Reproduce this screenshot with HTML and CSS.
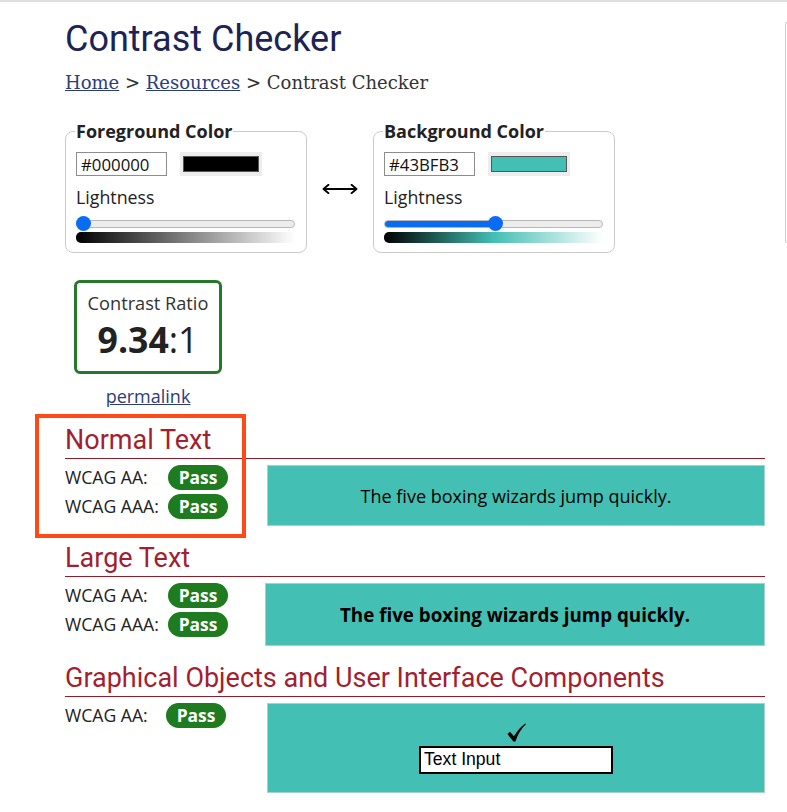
FILE: index.html
```html
<!DOCTYPE html>
<html lang="en">
<head>
<meta charset="utf-8">
<title>Contrast Checker</title>
<link rel="stylesheet" href="styles.css">
</head>
<body>
<div class="topline"></div>
<div class="page">
  <main class="main">
    <h1 class="title">Contrast Checker</h1>
    <nav class="crumbs"><a href="#">Home</a> &gt; <a href="#">Resources</a> &gt; Contrast Checker</nav>

    <div class="pickers">
      <fieldset class="picker">
        <legend>Foreground Color</legend>
        <div class="color-row">
          <input class="hex" type="text" value="#000000">
          <span class="swatch"><span class="swatch-fill" style="background:#000000"></span></span>
        </div>
        <div class="picker-label">Lightness</div>
        <div class="slider">
          <div class="track"><div class="fill" style="width:0%"></div></div>
          <div class="thumb" style="left:0px"></div>
        </div>
        <div class="gradient gradient--fg"></div>
      </fieldset>

      <svg class="swap" width="36" height="10" viewBox="0 0 36 10" aria-hidden="true">
        <path d="M1.5 5H34.5M6.5 0.8L1.5 5L6.5 9.2M29.5 0.8L34.5 5L29.5 9.2" fill="none" stroke="#000" stroke-width="1.8" stroke-linecap="round" stroke-linejoin="round"/>
      </svg>

      <fieldset class="picker">
        <legend>Background Color</legend>
        <div class="color-row">
          <input class="hex" type="text" value="#43BFB3">
          <span class="swatch"><span class="swatch-fill" style="background:#43BFB3"></span></span>
        </div>
        <div class="picker-label">Lightness</div>
        <div class="slider">
          <div class="track"><div class="fill" style="width:52%"></div></div>
          <div class="thumb" style="left:104px"></div>
        </div>
        <div class="gradient gradient--bg"></div>
      </fieldset>
    </div>

    <div class="ratio">
      <div class="ratio-box">
        <div class="ratio-label">Contrast Ratio</div>
        <div class="ratio-value"><b>9.34</b>:1</div>
      </div>
      <a class="permalink" href="#">permalink</a>
    </div>

    <section class="result">
      <h2 class="result-title">Normal Text</h2>
      <div class="result-body">
        <div class="checks">
          <div class="check-row"><span class="check-label">WCAG AA:</span><span class="badge">Pass</span></div>
          <div class="check-row"><span class="check-label">WCAG AAA:</span><span class="badge">Pass</span></div>
        </div>
        <div class="sample sample--normal">The five boxing wizards jump quickly.</div>
      </div>
    </section>

    <section class="result result--large">
      <h2 class="result-title">Large Text</h2>
      <div class="result-body">
        <div class="checks">
          <div class="check-row"><span class="check-label">WCAG AA:</span><span class="badge">Pass</span></div>
          <div class="check-row"><span class="check-label">WCAG AAA:</span><span class="badge">Pass</span></div>
        </div>
        <div class="sample sample--large">The five boxing wizards jump quickly.</div>
      </div>
    </section>

    <section class="result result--graphics">
      <h2 class="result-title">Graphical Objects and User Interface Components</h2>
      <div class="result-body">
        <div class="checks">
          <div class="check-row"><span class="check-label">WCAG AA:</span><span class="badge">Pass</span></div>
        </div>
        <div class="sample sample--graphics">
          <svg class="checkmark" width="19" height="19" viewBox="0 0 18 18" aria-hidden="true">
            <path d="M0.4 10.4L2.8 8.4L6.6 12.6C9.6 7.4 13.2 3.2 17.4 0.4L17.9 1.2C13.8 4.9 10.4 10.2 8 17.6L6 17.6Z" fill="#000"/>
          </svg>
          <input class="text-input" type="text" value="Text Input">
        </div>
      </div>
    </section>
  </main>
  <aside class="sidebar"></aside>
</div>
<div class="highlight"></div>
</body>
</html>
```

FILE: styles.css
```css
html, body {
  margin: 0;
  padding: 0;
  background: #fff;
  overflow-x: hidden;
}

body {
  font-family: "Open Sans", "Noto Sans", sans-serif;
  font-size: 17.6px;
  color: #222;
  position: relative;
}

.topline {
  height: 2px;
  background: #dedede;
}

.page {
  display: flex;
  align-items: flex-start;
}

.main {
  width: 700px;
  flex: none;
  margin-left: 65px;
}

.sidebar {
  flex: none;
  width: 1px;
  height: 219px;
  margin-left: 20px;
  margin-top: 20px;
  border: 1px solid #cfcfcf;
  border-right: none;
  border-radius: 7px 0 0 7px;
}

.title {
  font-family: Roboto, "Liberation Sans", sans-serif;
  font-weight: 400;
  font-size: 36px;
  line-height: 43px;
  color: #1b2453;
  margin: 16px 0 0;
}

.crumbs {
  font-family: "DejaVu Serif", "Liberation Serif", serif;
  font-size: 18px;
  line-height: 24px;
  color: #333;
  margin-top: 10px;
}

.crumbs a {
  color: #2c3d7c;
}

.pickers {
  display: flex;
  align-items: center;
  gap: 15px;
  margin-top: 24px;
}

.picker {
  width: 242px;
  box-sizing: border-box;
  margin: 0;
  padding: 9px 11px 9px 10px;
  border: 1px solid #cbcbcb;
  border-radius: 8px;
}

.picker legend {
  font-weight: 700;
  font-size: 18px;
  line-height: 24px;
  color: #222;
  padding: 0 1px;
  margin-left: -1px;
}

.color-row {
  display: flex;
  align-items: center;
  gap: 13px;
}

.hex {
  width: 91px;
  height: 24px;
  box-sizing: border-box;
  border: 1px solid #8d8d8d;
  border-radius: 0;
  padding: 0 4px;
  margin: 0;
  font-family: "Open Sans", sans-serif;
  font-size: 16.8px;
  color: #111;
  background: #fff;
}

.swatch {
  width: 82px;
  height: 24px;
  box-sizing: border-box;
  padding: 4px 3px;
  background: #ededed;
  display: flex;
}

.swatch-fill {
  flex: 1;
  border: 1px solid #555;
}

.picker-label {
  margin-top: 9px;
  line-height: 24px;
  font-size: 17.8px;
  color: #222;
}

.slider {
  position: relative;
  height: 15px;
  margin-top: 7px;
  display: flex;
  align-items: center;
}

.track {
  flex: 1;
  height: 8px;
  box-sizing: border-box;
  border: 1px solid #b8b8b8;
  border-radius: 4px;
  background: #ededed;
  overflow: hidden;
}

.fill {
  height: 100%;
  background: #0a6cf2;
}

.thumb {
  position: absolute;
  top: 0;
  width: 15px;
  height: 15px;
  border-radius: 50%;
  background: #0a6cf2;
}

.gradient {
  height: 11px;
  margin-top: 1px;
  border-radius: 5px 0 0 5px;
}

.gradient--fg {
  background: linear-gradient(to right, #000, #fff);
}

.gradient--bg {
  background: linear-gradient(to right, #000, #43bfb3 50%, #fff);
}

.swap {
  display: block;
  flex: none;
  margin-top: 5px;
}

.ratio {
  width: 148px;
  margin: 27px 0 0 9px;
  text-align: center;
}

.ratio-box {
  border: 3px solid #26782a;
  border-radius: 6px;
  padding: 8px 0 11px;
}

.ratio-label {
  line-height: 24px;
  font-size: 18.2px;
  color: #333;
}

.ratio-value {
  margin-top: 3px;
  font-size: 35.6px;
  line-height: 42px;
  color: #222;
}

.ratio-value b {
  font-weight: 700;
}

.permalink {
  display: block;
  margin-top: 10px;
  line-height: 24px;
  font-size: 18px;
  color: #2c3d7c;
}

.result {
  margin-top: 17px;
}

.result-title {
  font-family: Roboto, "Liberation Sans", sans-serif;
  font-weight: 400;
  font-size: 27px;
  line-height: 31px;
  color: #a31f30;
  margin: 0;
  padding-bottom: 2px;
  border-bottom: 1px solid #8e1d2b;
}

.result-body {
  display: flex;
  align-items: flex-start;
  margin-top: 6px;
}

.checks {
  width: 202px;
  flex: none;
  display: flex;
  flex-direction: column;
  gap: 4px;
}

.result--large .checks {
  width: 200px;
}

.check-row {
  display: flex;
  align-items: center;
  height: 25px;
}

.check-label {
  width: 103px;
  line-height: 25px;
  color: #222;
}

.result--graphics .check-label {
  width: 101px;
}

.badge {
  width: 60px;
  height: 25px;
  line-height: 25px;
  border-radius: 13px;
  background: #1e7b1f;
  color: #fff;
  font-weight: 700;
  font-size: 17.4px;
  text-align: center;
}

.sample {
  flex: 1;
  box-sizing: border-box;
  background: #43bfb3;
  border: 1px solid #a6d1cd;
  display: flex;
  align-items: center;
  justify-content: center;
  color: #000;
}

.sample--normal {
  height: 61px;
  font-size: 18px;
}

.sample--large {
  height: 63px;
  font-size: 18.8px;
  font-weight: 700;
}

.sample--graphics {
  height: 90px;
  flex-direction: column;
  gap: 4px;
}

.checkmark {
  display: block;
}

.text-input {
  width: 194px;
  height: 28px;
  box-sizing: border-box;
  margin: 0;
  padding: 0 3px;
  border: 2px solid #000;
  border-radius: 0;
  background: #fff;
  font-family: "Liberation Sans", Arial, sans-serif;
  font-size: 17.6px;
  color: #000;
}

.highlight {
  position: absolute;
  left: 35px;
  top: 414px;
  width: 211px;
  height: 124px;
  box-sizing: border-box;
  border: 4px solid #ff4a17;
  pointer-events: none;
}
```
